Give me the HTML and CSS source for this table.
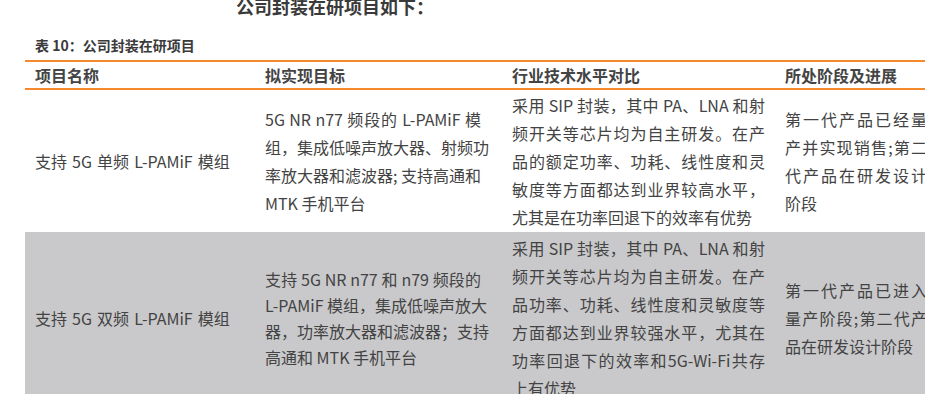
FILE: index.html
```html
<!DOCTYPE html>
<html lang="zh-CN">
<head>
<meta charset="utf-8">
<title>公司封装在研项目</title>
<link rel="stylesheet" href="styles.css">
</head>
<body>
<p class="intro">公司封装在研项目如下：</p>
<p class="caption">表 10：公司封装在研项目</p>
<table class="projects">
  <colgroup>
    <col class="c1"><col class="c2"><col class="c3"><col class="c4">
  </colgroup>
  <thead>
    <tr>
      <th>项目名称</th>
      <th>拟实现目标</th>
      <th>行业技术水平对比</th>
      <th>所处阶段及进展</th>
    </tr>
  </thead>
  <tbody>
    <tr class="row-a">
      <td class="name">支持 5G 单频 L-PAMiF 模组</td>
      <td class="lines">
        <span class="fill">5G NR n77 频段的 L-PAMiF 模</span>
        <span class="fill">组，集成低噪声放大器、射频功</span>
        <span class="fill">率放大器和滤波器; 支持高通和</span>
        <span>MTK 手机平台</span>
      </td>
      <td class="lines">
        <span class="fill">采用 SIP 封装，其中 PA、LNA 和射</span>
        <span class="fill">频开关等芯片均为自主研发。在产</span>
        <span class="fill">品的额定功率、功耗、线性度和灵</span>
        <span class="fill">敏度等方面都达到业界较高水平，</span>
        <span>尤其是在功率回退下的效率有优势</span>
      </td>
      <td class="lines">
        <span class="fill">第一代产品已经量</span>
        <span class="fill">产并实现销售;第二</span>
        <span class="fill">代产品在研发设计</span>
        <span>阶段</span>
      </td>
    </tr>
    <tr class="row-b">
      <td class="name">支持 5G 双频 L-PAMiF 模组</td>
      <td class="lines tight">
        <span class="fill">支持 5G NR n77 和 n79 频段的</span>
        <span class="fill">L-PAMiF 模组，集成低噪声放大</span>
        <span class="fill">器，功率放大器和滤波器；支持</span>
        <span>高通和 MTK 手机平台</span>
      </td>
      <td class="lines">
        <span class="fill">采用 SIP 封装，其中 PA、LNA 和射</span>
        <span class="fill">频开关等芯片均为自主研发。在产</span>
        <span class="fill">品功率、功耗、线性度和灵敏度等</span>
        <span class="fill">方面都达到业界较强水平，尤其在</span>
        <span class="fill">功率回退下的效率和5G-Wi-Fi共存</span>
        <span>上有优势</span>
      </td>
      <td class="lines">
        <span class="fill">第一代产品已进入</span>
        <span class="fill">量产阶段;第二代产</span>
        <span>品在研发设计阶段</span>
      </td>
    </tr>
  </tbody>
</table>
</body>
</html>
```
FILE: styles.css
```css
html, body {
  margin: 0;
  padding: 0;
  background: #ffffff;
  overflow: hidden;
}

body {
  font-family: "Noto Sans CJK SC", "Noto Sans", sans-serif;
  color: #404040;
}

.intro {
  margin: -3px 0 0 236px;
  font-size: 18px;
  line-height: 18px;
  font-weight: 700;
  color: #3a3a3a;
}

.caption {
  margin: 23px 0 0 35px;
  font-size: 14px;
  line-height: 14px;
  font-weight: 700;
  color: #3a3a3a;
}

.projects {
  margin: 8px 0 0 25px;
  border-collapse: separate;
  border-spacing: 0;
  table-layout: fixed;
  width: 920px;
}

.c1 { width: 230px; }
.c2 { width: 247px; }
.c3 { width: 273px; }
.c4 { width: 170px; }

.projects th {
  border-top: 2px solid #f5892c;
  border-bottom: 2px solid #f5892c;
  height: 26px;
  padding: 0 10px;
  text-align: left;
  font-size: 16px;
  line-height: 26px;
  font-weight: 700;
  color: #444444;
  white-space: nowrap;
}

.projects td {
  padding: 0 10px;
  vertical-align: middle;
  font-size: 16px;
  line-height: 28px;
  color: #434343;
  white-space: nowrap;
}

.projects td.name { word-spacing: 1.5px; }

.projects td:nth-child(2) { padding-right: 21px; }
.projects td:nth-child(4) { padding-right: 18px; }

.row-a td { height: 142px; }

.row-b { background: #c9c9cb; }
.row-b td { height: 172px; }

.lines span {
  display: block;
  white-space: nowrap;
  text-align: left;
}

.lines span.fill {
  text-align: justify;
  text-align-last: justify;
}

.lines.tight { line-height: 26px; }
```
